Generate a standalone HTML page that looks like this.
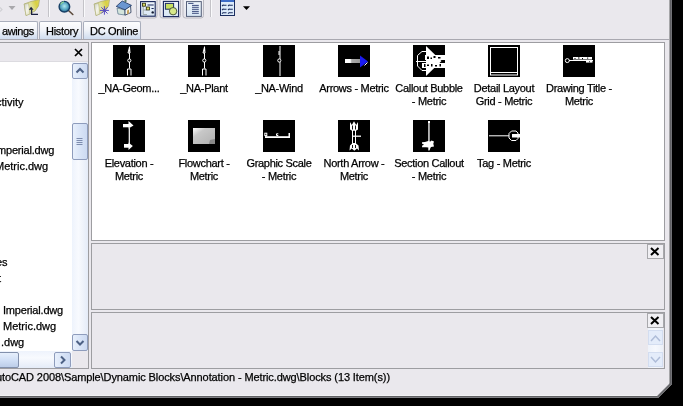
<!DOCTYPE html>
<html><head><meta charset="utf-8">
<style>
*{margin:0;padding:0;box-sizing:border-box}
html,body{width:683px;height:406px;overflow:hidden;background:#000}
body{font-family:"Liberation Sans",sans-serif;font-size:11px;color:#000;position:relative}
.a{position:absolute}
.t{will-change:transform;-webkit-text-stroke:0.25px #000}
#win{position:absolute;left:0;top:0;width:672px;height:398px;background:#EAE8ED;
 clip-path:polygon(0 0,672px 0,672px 384px,658px 398px,0 398px)}
#rb{position:absolute;left:669px;top:0;width:3px;height:385px;background:linear-gradient(90deg,#D8D8DA,#5E5E62 40%,#626266 60%,#7E7E82)}
#bb{position:absolute;left:0;top:395px;width:659px;height:3px;background:linear-gradient(#F2F2F4 33%,#5E5E62 34%,#626266 66%,#7E7E82 67%)}
.tab{position:absolute;top:21px;height:18px;border:1px solid #A9AEBC;border-bottom:none;
 background:linear-gradient(#FDFDFE,#F2F4F9 45%,#CFDCEF);border-radius:2px 2px 0 0;padding-top:3px;white-space:nowrap;letter-spacing:-0.3px}
.panel{position:absolute;border:1px solid #9D9DA1}
.lbl{position:absolute;width:80px;text-align:center;line-height:13px;white-space:nowrap;letter-spacing:-0.3px}
.ico{position:absolute;width:32px;height:32px;background:#000}
.tree{position:absolute;white-space:nowrap;line-height:16px}
.xb{position:absolute;width:17px;height:15px;border:1px solid #A8A8AC;background:#F0EFF3}
.sb{position:absolute;border:1px solid #8E9CBC;border-radius:2px;background:linear-gradient(90deg,#E8F0FC,#D6E2F6 60%,#CCDAF2)}
</style></head><body>
<div id="win">
 <!-- toolbar -->
 <svg class="a" style="left:0;top:0" width="260" height="21">
  <defs>
   <linearGradient id="fold" x1="0" y1="0.6" x2="1" y2="0.2"><stop offset="0" stop-color="#E4E8C8"/><stop offset="0.5" stop-color="#E0E090"/><stop offset="0.8" stop-color="#D8D040"/><stop offset="1" stop-color="#E0D860"/></linearGradient>
   <linearGradient id="flap" x1="0" y1="0" x2="1" y2="1"><stop offset="0" stop-color="#C8CCC0"/><stop offset="0.5" stop-color="#F4F4EC"/><stop offset="1" stop-color="#DCDCB0"/></linearGradient>
   <radialGradient id="lens" cx="0.5" cy="0.45" r="0.6"><stop offset="0" stop-color="#B0E8EE"/><stop offset="0.55" stop-color="#58A8C4"/><stop offset="1" stop-color="#1E5680"/></radialGradient>
   <linearGradient id="btn" x1="0" y1="0" x2="0" y2="1"><stop offset="0" stop-color="#F4F4F8"/><stop offset="1" stop-color="#E4E3EA"/></linearGradient>
   <linearGradient id="pane" x1="0" y1="0" x2="0" y2="1"><stop offset="0" stop-color="#EEF4FB"/><stop offset="1" stop-color="#D8E6F4"/></linearGradient>
  </defs>
  <!-- faint prior arrow -->
  <path d="M0 7.5 L2 9.5 L0 11.5" stroke="#D0D0D4" fill="none" stroke-width="1.2"/>
  <path d="M8.5 6 L15.5 6 L12 10 Z" fill="#A9A8AC"/>
  <!-- folder up -->
  <path d="M24.2 4 L31 1.5 L39.5 -0.5 L38.5 6 L35 11 L30 13.5 L26 15.5 Z" fill="url(#fold)" stroke="#A8A868" stroke-width="0.7"/>
  <path d="M24.2 4 L28.5 3.5 L30 14 L26 15.5 Z" fill="url(#flap)" stroke="#A8A868" stroke-width="0.5"/>
  <path d="M28.8 9.8 L31.1 6.8 L33.6 9.8 Z" fill="#1B2040"/>
  <path d="M31.6 9.5 V14.3 H38" stroke="#1B2040" fill="none" stroke-width="1.3"/>
  <line x1="48.5" y1="0" x2="48.5" y2="17" stroke="#C4C3C8"/>
  <line x1="49.5" y1="0" x2="49.5" y2="17" stroke="#FAFAFC"/>
  <!-- search -->
  <path d="M68.5 10.5 L72.8 14.5" stroke="#5C4A3C" stroke-width="1.6" stroke-linecap="round"/>
  <circle cx="64.4" cy="6.7" r="5.3" fill="url(#lens)" stroke="#173F66" stroke-width="1.4"/>
  <path d="M60.5 4.5 A4.5 4.5 0 0 1 64 1.8" stroke="#8ED89A" stroke-width="1.2" fill="none"/>
  <line x1="83.5" y1="0" x2="83.5" y2="17" stroke="#C4C3C8"/>
  <line x1="84.5" y1="0" x2="84.5" y2="17" stroke="#FAFAFC"/>
  <!-- folder star -->
  <path d="M94.2 4 L101 1.5 L109.5 -0.5 L108.5 6 L105 11 L100 13.5 L96 15.5 Z" fill="url(#fold)" stroke="#A8A868" stroke-width="0.7"/>
  <path d="M94.2 4 L98.5 3.5 L100 14 L96 15.5 Z" fill="url(#flap)" stroke="#A8A868" stroke-width="0.5"/>
  <path d="M104.4 6.2 V14.7 M100 10.4 H108.9 M101.3 7.3 L107.5 13.5 M107.5 7.3 L101.3 13.5" stroke="#5448C0" stroke-width="1"/>
  <!-- home -->
  <path d="M117 8 L125 10 L125 15 L118 14 Z" fill="#D4E4DC" stroke="#40607A" stroke-width="0.6"/>
  <path d="M125 9.5 L130.5 5.5 L131 12.5 L125 15.2 Z" fill="#F2F6F4" stroke="#1E2E50" stroke-width="0.8"/>
  <path d="M116.2 6.4 L122.2 1 L131.5 5.4 L125 9.8 Z" fill="#6A96D0" stroke="#1E3560" stroke-width="0.8"/>
  <rect x="124.5" y="-1" width="2" height="3" fill="#5A7A6A"/>
  <path d="M127 10.5 L129 9.5 L129 13.5 L127 14.3 Z" fill="#C8A460"/>
  <!-- toggle buttons -->
  <rect x="136.5" y="-2.5" width="20.5" height="20.5" rx="2.5" fill="url(#btn)" stroke="#B9B8C0"/>
  <rect x="140.6" y="1.6" width="14.6" height="14.6" fill="url(#pane)" stroke="#18265A" stroke-width="1.1"/>
  <path d="M143.2 6.5 V14.5 H147 M143.2 10 H146" stroke="#A0A8A8" fill="none"/>
  <rect x="142.4" y="3.2" width="3.2" height="3" fill="#D8D860" stroke="#2A2A10" stroke-width="0.8"/>
  <rect x="146.3" y="7" width="3.2" height="3" fill="#D8D860" stroke="#2A2A10" stroke-width="0.8"/>
  <path d="M147.5 5 H153.7 M151.5 8.5 H153.7" stroke="#18265A" stroke-width="1"/>
  <circle cx="152.7" cy="12.4" r="1.2" fill="#101830"/>
  <rect x="160" y="-2.5" width="20.5" height="20.5" rx="2.5" fill="url(#btn)" stroke="#B9B8C0"/>
  <rect x="163.4" y="1.4" width="15.2" height="15.2" fill="url(#pane)" stroke="#18265A" stroke-width="1.1"/>
  <rect x="165.4" y="3.4" width="8.2" height="5.8" fill="#C8E060" stroke="#1F2E63" stroke-width="1"/>
  <circle cx="173.1" cy="11.2" r="3.7" fill="#D6E88A" stroke="#3E4A30" stroke-width="0.9"/>
  <rect x="183" y="-2.5" width="20.5" height="20.5" rx="2.5" fill="url(#btn)" stroke="#B9B8C0"/>
  <rect x="186.5" y="1.6" width="14.8" height="14.8" fill="url(#pane)" stroke="#56607A" stroke-width="1"/>
  <path d="M188.2 3.4 H193.5 M192 5.4 H198.8 M192 7.3 H198.8 M192 9.3 H198.8 M192 11.4 H198.8 M192 13.3 H198.8" stroke="#2A3A70" stroke-width="0.9"/>
  <line x1="210.5" y1="0" x2="210.5" y2="17" stroke="#C4C3C8"/>
  <line x1="211.5" y1="0" x2="211.5" y2="17" stroke="#FAFAFC"/>
  <!-- views -->
  <rect x="220.5" y="-0.5" width="14" height="16" fill="#DDEBFA" stroke="#1C2E60" stroke-width="1"/>
  <rect x="221" y="0" width="13" height="2" fill="#3C6CC8"/>
  <g stroke="#1C2E60" stroke-width="1.1">
   <path d="M222 6 L223.5 4.8 M223.5 5.2 H226.5 M228 6 L229.5 4.8 M229.5 5.2 H232.8"/>
   <path d="M222 10 L223.5 8.8 M223.5 9.2 H226.5 M228 10 L229.5 8.8 M229.5 9.2 H232.8"/>
   <path d="M222 13.6 L223.5 12.4 M223.5 12.8 H226.5 M228 13.6 L229.5 12.4 M229.5 12.8 H232.8"/>
  </g>
  <path d="M243 6.2 L250 6.2 L246.5 9.9 Z" fill="#000"/>
 </svg>

 <!-- tabs -->
 <div class="a" style="left:0;top:39px;width:672px;height:1px;background:#A9A8B0"></div>
 <div class="tab t" style="left:-6px;width:44px;padding-left:7px;letter-spacing:-0.4px">awings</div>
 <div class="tab t" style="left:39px;width:43px;padding-left:6px">History</div>
 <div class="tab t" style="left:83px;width:58px;padding-left:6px">DC Online</div>

 <!-- left panel -->
 <div class="panel" style="left:-1px;top:42px;width:90px;height:327px;background:#fff">
  <div class="a" style="left:0;top:0;width:88px;height:19px;background:#EAE8ED;border-bottom:1px solid #DCDBE0"></div>
 </div>
 <svg class="a" style="left:73.5px;top:48px" width="10" height="9"><path d="M1 1 L8 8 M8 1 L1 8" stroke="#000" stroke-width="1.7"/></svg>
 <div class="tree t" style="left:-4.5px;top:94px">ctivity</div>
 <div class="tree t" style="left:-3px;top:142px;letter-spacing:-0.2px">mperial.dwg</div>
 <div class="tree t" style="left:-5.5px;top:158px">Metric.dwg</div>
 <div class="tree t" style="left:-4px;top:254px">es</div>
 <div class="tree t" style="left:-2px;top:270px">t</div>
 <div class="tree t" style="left:3px;top:302px;letter-spacing:-0.2px">Imperial.dwg</div>
 <div class="tree t" style="left:3px;top:318px">Metric.dwg</div>
 <div class="tree t" style="left:1px;top:334px">.dwg</div>
 <!-- v scrollbar -->
 <div class="a" style="left:72px;top:62px;width:16px;height:289px;background:linear-gradient(90deg,#EEF3FC,#F8FAFE 40%,#E4EBF8)"></div>
 <div class="sb" style="left:72px;top:63px;width:16px;height:16px"></div>
 <svg class="a" style="left:72px;top:63px" width="16" height="16"><path d="M4.5 9.5 L8 6 L11.5 9.5" stroke="#4D6185" fill="none" stroke-width="2"/></svg>
 <div class="sb" style="left:72px;top:123px;width:16px;height:37px"></div>
 <svg class="a" style="left:72px;top:123px" width="16" height="37"><path d="M4.5 15.5 H10.5 M4.5 17.5 H10.5 M4.5 19.5 H10.5 M4.5 21.5 H10.5" stroke="#7D8CAE"/></svg>
 <div class="sb" style="left:72px;top:334px;width:16px;height:17px"></div>
 <svg class="a" style="left:72px;top:334px" width="16" height="17"><path d="M4.5 7 L8 10.5 L11.5 7" stroke="#4D6185" fill="none" stroke-width="2"/></svg>
 <!-- h scrollbar -->
 <div class="a" style="left:0;top:351px;width:72px;height:17px;background:linear-gradient(#EEF3FC,#F8FAFE 40%,#E4EBF8)"></div>
 <div class="sb" style="left:-2px;top:352px;width:21px;height:16px;border-color:#8290AC;background:linear-gradient(#E6EFFC,#D2E0F6 50%,#BCCDE8)"></div>
 <div class="sb" style="left:54px;top:352px;width:17px;height:16px"></div>
 <svg class="a" style="left:54px;top:352px" width="17" height="16"><path d="M7 4.5 L10.5 8 L7 11.5" stroke="#4D6185" fill="none" stroke-width="2"/></svg>
 <div class="a" style="left:72px;top:351px;width:16px;height:17px;background:#EAE8ED"></div>

 <!-- content panel -->
 <div class="panel" style="left:91px;top:42px;width:574px;height:199px;background:#fff"></div>
 <svg class="a" style="left:0;top:0" width="672" height="241">
  <g fill="#000">
   <rect x="113" y="45" width="32" height="32"/><rect x="188" y="45" width="32" height="32"/>
   <rect x="263" y="45" width="32" height="32"/><rect x="338" y="45" width="32" height="32"/>
   <rect x="413" y="45" width="32" height="32"/><rect x="488" y="45" width="32" height="32"/>
   <rect x="563" y="45" width="32" height="32"/>
   <rect x="113" y="120" width="32" height="32"/><rect x="188" y="120" width="32" height="32"/>
   <rect x="263" y="120" width="32" height="32"/><rect x="338" y="120" width="32" height="32"/>
   <rect x="413" y="120" width="32" height="32"/><rect x="488" y="120" width="32" height="32"/>
  </g>
  <!-- NA Geom -->
  <g transform="translate(113,45)" stroke="#fff" fill="none" stroke-width="1">
   <path d="M16.5 1.5 V6.5 M15 8 L16.5 2 L17 8 Z M16.5 8 V14 M16.5 17 V23.5"/>
   <circle cx="16.3" cy="15.5" r="1.6"/>
   <path d="M14.5 30.5 V24 H18 V30.5"/>
  </g>
  <g transform="translate(188,45)" stroke="#fff" fill="none" stroke-width="1">
   <path d="M16.5 1.5 V6.5 M15 8 L16.5 2 L17 8 Z M16.5 8 V14 M16.5 17 V23.5"/>
   <circle cx="16.3" cy="15.5" r="1.6"/>
   <path d="M14.5 30.5 V24 H18 V30.5"/>
  </g>
  <g transform="translate(263,45)" stroke="#fff" fill="none" stroke-width="1">
   <path d="M17 1 V14 M16 6 V10 M17 17 V31"/>
   <circle cx="16.3" cy="15.5" r="1.6"/>
  </g>
  <!-- arrows -->
  <g transform="translate(338,45)">
   <defs><linearGradient id="ag" x1="0" x2="1"><stop offset="0" stop-color="#fff"/><stop offset="0.35" stop-color="#fff"/><stop offset="0.45" stop-color="#aaa"/><stop offset="1" stop-color="#999"/></linearGradient></defs>
   <rect x="7" y="14" width="15" height="4" fill="url(#ag)"/>
   <path d="M22 10.5 L30 16.5 L22 22.5 Z" fill="#1A1AF0"/>
   <path d="M29.5 17.5 L26.5 20.5" stroke="#fff" stroke-width="1"/>
  </g>
  <!-- callout bubble -->
  <g transform="translate(413,45)">
   <path d="M13 1 L28.5 16 L13 31 Z" fill="#fff"/>
   <path d="M9 6.5 H13 M13 25.5 H9 L4.5 21 V10.5 L9 6.5" stroke="#fff" fill="none" stroke-width="1"/>
   <path d="M3 16.5 H22" stroke="#fff" stroke-width="1"/>
   <rect x="12" y="10" width="20" height="5" fill="#fff"/>
   <rect x="9" y="18" width="23" height="5" fill="#fff"/>
   <g fill="#000">
    <rect x="14" y="11.5" width="2" height="2.5"/><rect x="17.5" y="12.5" width="1.5" height="1.5"/>
    <rect x="20.5" y="11" width="2" height="2"/><rect x="25" y="12" width="2.5" height="1.5"/>
    <rect x="11" y="19" width="1.5" height="3"/><rect x="14" y="19.5" width="2" height="1.5"/>
    <rect x="18" y="19" width="1.5" height="2.5"/><rect x="22" y="20" width="2" height="1.5"/><rect x="26.5" y="19" width="1.5" height="2.5"/>
   </g>
  </g>
  <!-- detail layout -->
  <g transform="translate(488,45)" stroke="#fff" fill="none" stroke-width="1">
   <rect x="2.5" y="2.5" width="27" height="27.5"/>
   <path d="M3 27.5 H29"/>
  </g>
  <!-- drawing title -->
  <g transform="translate(563,45)" fill="#fff">
   <circle cx="4.3" cy="15.6" r="2" fill="none" stroke="#fff" stroke-width="1"/>
   <path d="M6 15.5 H30" stroke="#fff" stroke-width="1"/>
   <rect x="10" y="12" width="19" height="2.5"/>
   <rect x="23" y="16" width="6.5" height="1.6"/>
   <g fill="#000"><rect x="11.5" y="13" width="1" height="1"/><rect x="15" y="12.5" width="1.5" height="1"/><rect x="19" y="13" width="1" height="1.2"/><rect x="24" y="12.6" width="1.2" height="1"/><rect x="26" y="16.4" width="1" height="0.8"/></g>
  </g>
  <!-- elevation -->
  <g transform="translate(113,120)" fill="#fff">
   <rect x="10" y="4" width="6" height="3.3"/>
   <path d="M15.5 1 L20.5 5.5 L15.5 8.6 Z"/>
   <path d="M16.3 8 V24" stroke="#fff" stroke-width="1.2"/>
   <rect x="11" y="24" width="5" height="3.7"/>
   <path d="M15.5 22.4 L19.8 26 L15.5 30 Z"/>
  </g>
  <!-- flowchart -->
  <g transform="translate(188,120)">
   <defs><linearGradient id="fg" x1="0" y1="0" x2="1" y2="1"><stop offset="0" stop-color="#fff"/><stop offset="0.3" stop-color="#c8c8c8"/><stop offset="1" stop-color="#b0b0b0"/></linearGradient></defs>
   <rect x="5" y="8" width="22" height="16" fill="url(#fg)"/>
   <path d="M21 24 L22 20 L27 19 L27 24 Z" fill="#888"/>
  </g>
  <!-- graphic scale -->
  <g transform="translate(263,120)" fill="#fff">
   <rect x="2" y="16.2" width="25" height="1.8"/>
   <rect x="1.8" y="13.2" width="2" height="2.4" fill="none" stroke="#fff" stroke-width="1"/>
   <path d="M2.8 15.5 V17" stroke="#fff"/>
   <path d="M15.3 13.8 H13.5 V15.5 H15.3" stroke="#fff" fill="none" stroke-width="1"/>
   <rect x="25.5" y="13" width="1.5" height="4"/>
  </g>
  <!-- north arrow -->
  <g transform="translate(338,120)">
   <path d="M12 9.5 L12 2 L13.8 5 L16 1.2 L18.2 5 L20 2 L20 9.5 L18 10.8 L14 10.8 Z" fill="#fff"/>
   <path d="M14.5 5.5 V9.5 M17.5 5.5 V9.5" stroke="#000" stroke-width="0.9"/>
   <path d="M14.5 10 V24 M17.5 10 V24" stroke="#fff" stroke-width="1"/>
   <path d="M14.2 16.2 H23" stroke="#fff" stroke-width="1.3"/>
   <path d="M11.5 30.5 L12 25.5 L14.5 23 L17.5 23 L20.5 25.5 L21 30.5 L19 28.5 L16.3 30.8 L13.8 28.5 Z" fill="#fff"/>
   <path d="M14.5 25 V28 M17.5 25 V28" stroke="#000" stroke-width="0.9"/>
  </g>
  <!-- section callout -->
  <g transform="translate(413,120)" fill="#fff">
   <rect x="15.3" y="1.2" width="1.3" height="21"/>
   <rect x="15" y="1" width="2" height="2"/>
   <path d="M9 22.2 L12 22 L14.5 21.2 L15.5 20.8 L17 21.8 L18.5 20.6 L21 21.5 L20.3 23.8 L21 26.5 L18 27 L17.2 28.5 L16.5 30.5 L15.3 30.5 L15.3 27.5 L13 27.2 L9 27.2 L9.2 25.5 L10.5 25 L10.5 24 L9 23.8 Z"/>
  </g>
  <!-- tag -->
  <g transform="translate(488,120)" fill="#fff">
   <path d="M1 15.8 H21" stroke="#fff" stroke-width="1"/>
   <path d="M23.5 11 H28 L30 13 V18.5 L28 20.5 H23.5 L21 18 V13.5 Z" fill="none" stroke="#fff" stroke-width="1"/>
   <rect x="24" y="14" width="8" height="3.5"/>
  </g>
 </svg>
 <div class="lbl t" style="left:89px;top:82px">_NA-Geom...</div>
 <div class="lbl t" style="left:164px;top:82px">_NA-Plant</div>
 <div class="lbl t" style="left:239px;top:82px">_NA-Wind</div>
 <div class="lbl t" style="left:314px;top:82px">Arrows - Metric</div>
 <div class="lbl t" style="left:389px;top:82px">Callout Bubble<br>- Metric</div>
 <div class="lbl t" style="left:464px;top:82px">Detail Layout<br>Grid - Metric</div>
 <div class="lbl t" style="left:539px;top:82px">Drawing Title -<br>Metric</div>
 <div class="lbl t" style="left:89px;top:157px">Elevation -<br>Metric</div>
 <div class="lbl t" style="left:164px;top:157px">Flowchart -<br>Metric</div>
 <div class="lbl t" style="left:239px;top:157px">Graphic Scale<br>- Metric</div>
 <div class="lbl t" style="left:314px;top:157px">North Arrow -<br>Metric</div>
 <div class="lbl t" style="left:389px;top:157px">Section Callout<br>- Metric</div>
 <div class="lbl t" style="left:464px;top:157px">Tag - Metric</div>

 <!-- preview pane -->
 <div class="panel" style="left:91px;top:243px;width:574px;height:67px"></div>
 <div class="xb" style="left:647px;top:244px"></div>
 <svg class="a" style="left:650px;top:246.5px" width="10" height="9"><path d="M1 1 L8.5 8 M8.5 1 L1 8" stroke="#000" stroke-width="2"/></svg>
 <!-- description pane -->
 <div class="panel" style="left:91px;top:312px;width:574px;height:57px"></div>
 <div class="xb" style="left:647px;top:313px"></div>
 <svg class="a" style="left:650px;top:316px" width="10" height="9"><path d="M1 1 L8.5 8 M8.5 1 L1 8" stroke="#000" stroke-width="2"/></svg>
 <div class="a" style="left:648px;top:328px;width:15px;height:40px;background:linear-gradient(90deg,#EEF2FA,#F6F8FD 50%,#ECF0F8)"></div>
 <div class="a" style="left:648px;top:330px;width:15px;height:15px;border:1px solid #D3DDF0;background:#E4ECFA"></div>
 <svg class="a" style="left:648px;top:330px" width="15" height="15"><path d="M3 11 L7.5 6 L12 11" stroke="#AEBCD8" fill="none" stroke-width="1.5"/></svg>
 <div class="a" style="left:648px;top:352px;width:15px;height:15px;border:1px solid #D3DDF0;background:#E4ECFA"></div>
 <svg class="a" style="left:648px;top:352px" width="15" height="15"><path d="M3 5 L7.5 10 L12 5" stroke="#AEBCD8" fill="none" stroke-width="1.5"/></svg>

 <!-- status bar -->
 <div class="a t" style="left:-4px;top:370.5px;white-space:nowrap;line-height:13px;letter-spacing:-0.1px">utoCAD 2008\Sample\Dynamic Blocks\Annotation - Metric.dwg\Blocks (13 Item(s))</div>

 <div id="rb"></div>
 <div id="bb"></div>
 <svg class="a" style="left:656px;top:382px" width="16" height="16"><path d="M1.5 15 L15 1.5" stroke="#68686C" stroke-width="2"/></svg>
</div>
</body></html>
